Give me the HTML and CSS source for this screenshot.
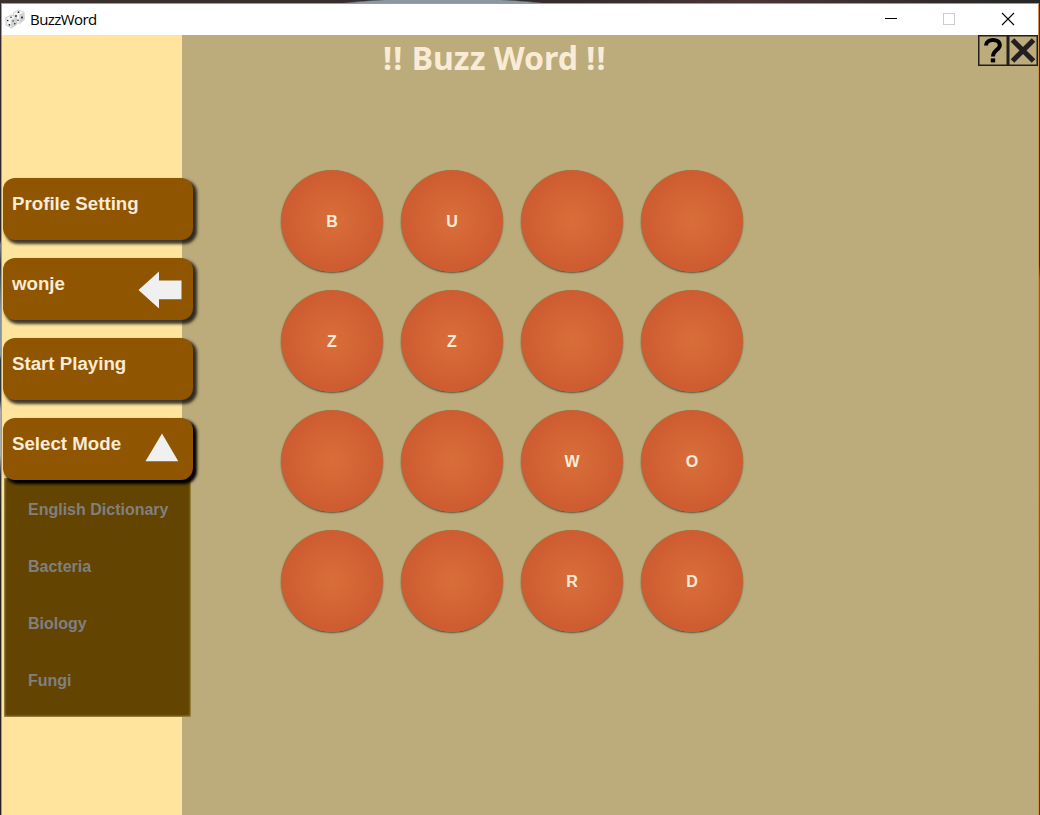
FILE: index.html
```html
<!DOCTYPE html>
<html lang="en">
<head>
<meta charset="utf-8">
<title>BuzzWord</title>
<link rel="stylesheet" href="styles.css">
</head>
<body>
<div class="desktop">
<div class="window">
  <header class="titlebar">
    <svg class="dice" width="20" height="20" viewBox="0 0 20 20">
      <path d="M8.500 3.500L13.500 1l5.500 2.200.4 7.300-4.800 4.300-5.600-2.300z" fill="#f6f6f6" stroke="#bbb" stroke-width=".6"/>
      <path d="M14.400 5.500l4.600-2.300.4 7.300-4.800 4.300z" fill="#d0d0d0"/>
      <path d="M.8 8.800l5.600-2.900 4.800 2.200.3 7.300-5.300 3.700-5-3z" fill="#f4f4f4" stroke="#aaa" stroke-width=".6"/>
      <path d="M6.200 11l5-2.900.3 7.300-5.300 3.700z" fill="#d2d2d2"/>
      <g fill="#222"><circle cx="13.500" cy="3.200" r=".9"/><circle cx="11" cy="7" r=".9"/><circle cx="13" cy="11.300" r=".8"/><circle cx="17" cy="8.500" r="1"/><circle cx="6" cy="8.200" r=".8"/><circle cx="2.700" cy="11.500" r=".8"/><circle cx="4.400" cy="15.800" r=".9"/><circle cx="8" cy="12" r=".7"/><circle cx="9.800" cy="14.700" r=".8"/></g>
    </svg>
    <span class="app-name">BuzzWord</span>
    <svg class="controls" width="138" height="31" viewBox="0 0 138 31" fill="none" shape-rendering="crispEdges">
      <path d="M5 14.500h12" stroke="#000"/>
      <rect x="63.500" y="9.500" width="11" height="11" stroke="#ccc"/>
      <path d="M122 9l12 12M134 9l-12 12" stroke="#000" stroke-width="1.100" shape-rendering="auto"/>
    </svg>
  </header>
  <div class="content">
    <aside class="sidebar">
      <button class="nav">Profile Setting</button>
      <button class="nav">wonje
        <svg class="arrow" width="45" height="38" viewBox="0 0 45 38"><path d="M.5 19L21 .5V9.500H43.500V28.300H21V37.500z" fill="#f0f0f0"/></svg>
      </button>
      <button class="nav">Start Playing</button>
      <button class="nav nav-open">Select Mode
        <svg class="triangle" width="34" height="29" viewBox="0 0 34 29"><path d="M17 .5L33.300 28.200H.5z" fill="#f0f0f0"/></svg>
      </button>
      <ul class="modes">
        <li>English Dictionary</li>
        <li>Bacteria</li>
        <li>Biology</li>
        <li>Fungi</li>
      </ul>
    </aside>
    <main class="main">
      <h1 class="heading"><span class="bang">!!</span> Buzz Word <span class="bang">!!</span></h1>
      <div class="grid">
        <div class="tile">B</div><div class="tile">U</div><div class="tile"></div><div class="tile"></div>
        <div class="tile">Z</div><div class="tile">Z</div><div class="tile"></div><div class="tile"></div>
        <div class="tile"></div><div class="tile"></div><div class="tile">W</div><div class="tile">O</div>
        <div class="tile"></div><div class="tile"></div><div class="tile">R</div><div class="tile">D</div>
      </div>
      <div class="tools">
        <svg width="30" height="31" viewBox="0 0 30 31" fill="none">
          <rect x=".75" y=".75" width="28.500" height="29.500" stroke="#231f20" stroke-width="1.500"/>
          <path d="M8 10.500C8 3.400 21.800 3 21.800 10.200C21.800 15 15 14.800 15 21.500" stroke="#000" stroke-width="4"/>
          <path d="M12.800 23.400h4.400v4h-4.400z" fill="#000"/>
        </svg>
        <svg width="30" height="31" viewBox="0 0 30 31" fill="none">
          <rect x=".75" y=".75" width="28.500" height="29.500" stroke="#231f20" stroke-width="1.500"/>
          <path d="M4.500 5L25.500 26M25.500 5L4.500 26" stroke="#231f20" stroke-width="5"/>
        </svg>
      </div>
    </main>
  </div>
</div>
</div>
</body>
</html>
```
FILE: styles.css
```css
* { box-sizing: border-box; }
body { margin: 0; font-family: "Liberation Sans", Arial, sans-serif; overflow: hidden; }
.desktop {
  height: 815px;
  padding: 3px 1px 0;
  background:
    radial-gradient(ellipse 124px 11px at 443px 9px, #8998a1 0 90%, transparent 100%) no-repeat 0 0 / 100% 3px,
    linear-gradient(90deg, #3a302e, #352c2b 55%, #4a3436 72%, #252724) no-repeat 0 0 / 100% 3px,
    linear-gradient(#302b2a 0 240px, #7b8389 245px, #343a40 265px, #8695a5 310px 355px, #333940 360px 400px, #aaa 410px 455px, #30343a 475px, #25221f 520px) no-repeat 0 0 / 1px 100%,
    linear-gradient(#2e2c27 0 265px, #63675a 280px 480px, #3b3c35) no-repeat 100% 0 / 1px 100%;
}
.window {
  display: flex;
  flex-direction: column;
  height: 812px;
  border: 1px solid #d1914c;
  border-bottom: 0;
}
.titlebar {
  display: flex;
  align-items: center;
  height: 31px;
  padding-left: 3px;
  background: #fff;
}
.dice { flex: none; margin-top: -2px; }
.app-name {
  margin: -2px 0 0 5px;
  font: 15px/20px "Open Sans", sans-serif;
  letter-spacing: -.55px;
  color: #000;
}
.controls { margin-left: auto; margin-right: 20px; }
.content { display: flex; flex: 1; min-height: 0; }
.sidebar {
  width: 180px;
  flex: none;
  padding: 143px 0 0 1px;
  background: #ffe49e;
  z-index: 1;
}
.nav {
  display: flex;
  justify-content: space-between;
  position: relative;
  z-index: 1;
  width: 190px;
  height: 62px;
  margin: 0 0 18px;
  padding: 15px 10px 0 9px;
  border: 0;
  border-radius: 12px;
  background: #8f5500;
  color: #faebd7;
  font: bold 18.700px/21px "Liberation Sans", Arial, sans-serif;
  text-align: left;
  box-shadow: 3px 3px 3px 1px rgba(0, 0, 0, .75);
}
.nav-open { margin-bottom: 0; padding-right: 9px; box-shadow: 3px 3px 3px 1px #000; }
.arrow { flex: none; margin-top: -2px; }
.triangle { flex: none; margin: 0 5px 0 0; }
.modes {
  width: 187px;
  height: 239px;
  margin: -2px 0 0 1px;
  padding: 23px 0 0 24px;
  list-style: none;
  background: #634400;
  box-shadow: inset 0 0 2px 1px #a58f4c;
  color: #808080;
  font: bold 16px/18px "Liberation Sans", Arial, sans-serif;
}
.modes li { margin-bottom: 39px; }
.main {
  display: grid;
  grid-template-columns: 796px 60px;
  grid-template-rows: 135px 1fr;
  flex: 1;
  background: #bcac7b;
}
.heading {
  margin: 0;
  padding: 1px 0 0 201px;
  font: bold 32px/44px "Noto Sans", "Open Sans", sans-serif;
  color: #faebd7;
  white-space: nowrap;
}
.bang { letter-spacing: 1.200px; }
.grid {
  grid-row: 2;
  display: grid;
  grid-template-columns: repeat(4, 102px);
  grid-auto-rows: 102px;
  align-content: start;
  gap: 18px;
  padding-left: 99px;
}
.tile {
  display: flex;
  align-items: center;
  justify-content: center;
  padding-top: 1px;
  border: .5px solid transparent;
  border-radius: 50%;
  background: radial-gradient(circle 51px, #d96e3a, #cd5c30 99%, #7c6642 100%);
  background-origin: border-box;
  box-shadow: 0 1px 2px -.5px rgba(0, 0, 0, .8);
  color: #faebd7;
  font: bold 16px/18px "Liberation Sans", Arial, sans-serif;
}
.tools { grid-column: 2; grid-row: 1; display: flex; }
```
